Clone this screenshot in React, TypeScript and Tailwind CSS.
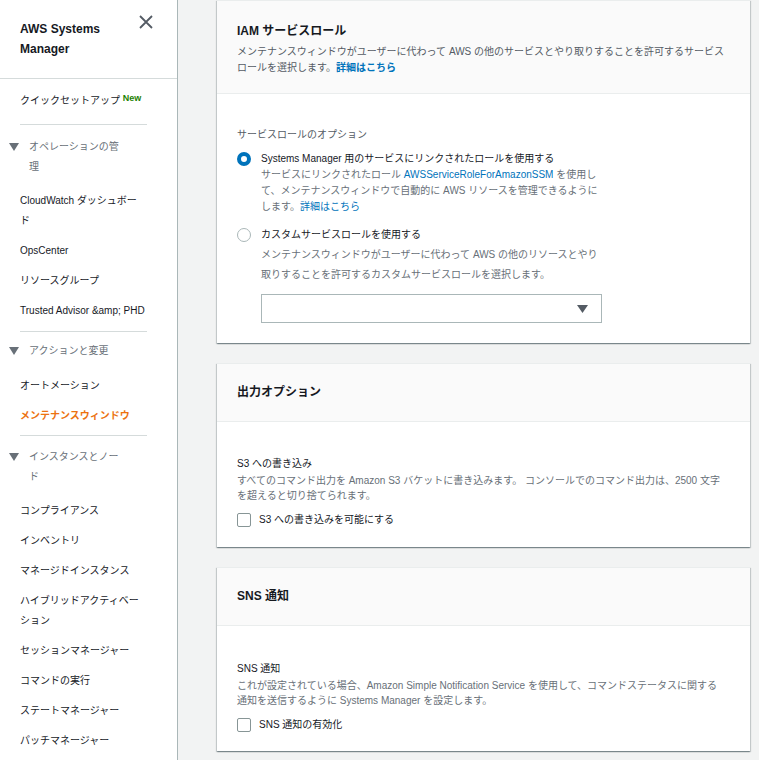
import type { ReactNode } from 'react';

const navGroups: { title: string; mt: string; pt: string; pb: string; items: { label: string; active?: boolean }[] }[] = [
  { title: 'オペレーションの管理', mt: 'mt-[9px]', pt: 'pt-[12px]', pb: 'pb-[9px]', items: [
    { label: 'CloudWatch ダッシュボード' },
    { label: 'OpsCenter' },
    { label: 'リソースグループ' },
    { label: 'Trusted Advisor &amp; PHD' },
  ] },
  { title: 'アクションと変更', mt: 'mt-[5px]', pt: 'pt-[9px]', pb: 'pb-[10px]', items: [
    { label: 'オートメーション' },
    { label: 'メンテナンスウィンドウ', active: true },
  ] },
  { title: 'インスタンスとノード', mt: 'mt-[4px]', pt: 'pt-[11px]', pb: 'pb-[9px]', items: [
    { label: 'コンプライアンス' },
    { label: 'インベントリ' },
    { label: 'マネージドインスタンス' },
    { label: 'ハイブリッドアクティベーション' },
    { label: 'セッションマネージャー' },
    { label: 'コマンドの実行' },
    { label: 'ステートマネージャー' },
    { label: 'パッチマネージャー' },
  ] },
];

function Triangle() {
  return (
    <svg width="10" height="8" viewBox="0 0 10 8" className="shrink-0 mt-[6px]">
      <path d="M0 0 H10 L5 8 Z" fill="#687078" />
    </svg>
  );
}

function Sidebar() {
  return (
    <aside className="w-[178px] shrink-0 bg-white border-r border-[#aab7b8] h-full">
      <div className="flex justify-between pl-[20px] pr-[23px] pt-[19px] pb-[19px] border-b border-[#d5dbdb]">
        <div className="text-[12px] leading-[20px] font-bold text-[#16191f] w-[100px]">
          AWS Systems Manager
        </div>
        <svg width="16" height="16" viewBox="0 0 16 16" className="mt-[-5px]">
          <path d="M2 2 L14 14 M14 2 L2 14" stroke="#545b64" strokeWidth="1.8" />
        </svg>
      </div>
      <nav className="pt-[7px]">
        <div className="px-[20px] py-[5px] text-[10px] leading-[20px] text-[#16191f]">
          クイックセットアップ <sup className="text-[9px] font-bold text-[#1d8102] relative top-[-3px]">New</sup>
        </div>
        {navGroups.map((g, i) => (
          <div key={g.title}>
            <div className={`mx-[20px] w-[127px] border-t border-[#d5dbdb] ${i === 0 ? 'mt-[8px]' : g.mt}`} />
            <div className={`flex gap-[10px] pl-[9px] ${g.pt} ${g.pb}`}>
              <Triangle />
              <span className="w-[95px] text-[10px] leading-[20px] text-[#687078]">{g.title}</span>
            </div>
            {g.items.map((it) => (
              <div
                key={it.label}
                className={`pl-[20px] w-[146px] py-[5px] text-[10px] leading-[20px] ${it.active ? 'text-[#ec7211] font-bold' : 'text-[#16191f]'}`}
              >
                {it.label}
              </div>
            ))}
          </div>
        ))}
      </nav>
    </aside>
  );
}

function Card({ title, desc, children }: { title: string; desc?: ReactNode; children: ReactNode }) {
  return (
    <section className="bg-white border-t border-[#eaeded] shadow-[0_1px_1px_0_rgba(0,28,36,0.3),1px_1px_1px_0_rgba(0,28,36,0.15),-1px_1px_1px_0_rgba(0,28,36,0.15)]">
      <div className={`bg-[#fafafa] border-b border-[#eaeded] px-[20px] ${desc ? 'pt-[20px] pb-[17px]' : 'pt-[18px] pb-[19px]'}`}>
        <h2 className="text-[12px] leading-[20px] font-bold text-[#16191f]">{title}</h2>
        {desc && <p className="mt-[3px] text-[10px] leading-[16px] text-[#545b64]">{desc}</p>}
      </div>
      {children}
    </section>
  );
}

function Radio({ checked }: { checked?: boolean }) {
  return checked ? (
    <span className="w-[14px] h-[14px] rounded-full border-[4px] border-[#0073bb] bg-white shrink-0 mt-[1px]" />
  ) : (
    <span className="w-[14px] h-[14px] rounded-full border-[1.5px] border-[#aab7b8] bg-white shrink-0 mt-[1px]" />
  );
}

function Checkbox({ label }: { label: string }) {
  return (
    <label className="flex items-center gap-[8px] mt-[9px]">
      <span className="w-[14px] h-[14px] rounded-[2px] border border-[#879596] bg-white shrink-0" />
      <span className="text-[10px] leading-[16px] text-[#16191f]">{label}</span>
    </label>
  );
}

export default function App() {
  return (
    <div className="flex h-[760px] w-[759px] overflow-hidden bg-[#f2f3f3] font-['Liberation_Sans','Noto_Sans_CJK_JP',sans-serif]">
      <Sidebar />
      <main className="flex-1 pl-[39px] pr-[9px] flex flex-col gap-[20px]">
        <Card
          title="IAM サービスロール"
          desc={
            <>
              メンテナンスウィンドウがユーザーに代わって AWS の他のサービスとやり取りすることを許可するサービスロールを選択します。
              <span className="font-bold text-[#0073bb]">詳細はこちら</span>
            </>
          }
        >
          <div className="px-[20px] pt-[33px] pb-[20px]">
            <div className="text-[10px] leading-[16px] text-[#545b64]">サービスロールのオプション</div>
            <div className="flex gap-[10px] mt-[8px]">
              <Radio checked />
              <div>
                <div className="text-[10px] leading-[16px] text-[#16191f]">
                  Systems Manager 用のサービスにリンクされたロールを使用する
                </div>
                <p className="w-[340px] text-[10px] leading-[16px] text-[#687078]">
                  サービスにリンクされたロール <span className="text-[#0073bb]">AWSServiceRoleForAmazonSSM</span> を使用して、メンテナンスウィンドウで自動的に AWS リソースを管理できるようにします。<span className="text-[#0073bb]">詳細はこちら</span>
                </p>
              </div>
            </div>
            <div className="flex gap-[10px] mt-[12px]">
              <Radio />
              <div>
                <div className="text-[10px] leading-[16px] text-[#16191f]">カスタムサービスロールを使用する</div>
                <p className="w-[340px] mt-[2px] text-[10px] leading-[20px] text-[#687078]">
                  メンテナンスウィンドウがユーザーに代わって AWS の他のリソースとやり取りすることを許可するカスタムサービスロールを選択します。
                </p>
                <div className="mt-[9px] w-[341px] h-[29px] border border-[#aab7b8] bg-white flex items-center justify-end pr-[13px]">
                  <svg width="11" height="8" viewBox="0 0 11 8">
                    <path d="M0 0 H11 L5.5 8 Z" fill="#545b64" />
                  </svg>
                </div>
              </div>
            </div>
          </div>
        </Card>

        <Card title="出力オプション">
          <div className="px-[20px] pt-[34px] pb-[19px]">
            <div className="text-[10px] leading-[16px] text-[#16191f]">S3 への書き込み</div>
            <p className="mt-[1px] text-[10px] leading-[15px] text-[#687078]">
              すべてのコマンド出力を Amazon S3 バケットに書き込みます。 コンソールでのコマンド出力は、2500 文字
              <br />
              を超えると切り捨てられます。
            </p>
            <Checkbox label="S3 への書き込みを可能にする" />
          </div>
        </Card>

        <Card title="SNS 通知">
          <div className="px-[20px] pt-[35px] pb-[18px]">
            <div className="text-[10px] leading-[16px] text-[#16191f]">SNS 通知</div>
            <p className="mt-[1px] text-[10px] leading-[15px] text-[#687078]">
              これが設定されている場合、Amazon Simple Notification Service を使用して、コマンドステータスに関する
              <br />
              通知を送信するように Systems Manager を設定します。
            </p>
            <Checkbox label="SNS 通知の有効化" />
          </div>
        </Card>
      </main>
    </div>
  );
}
